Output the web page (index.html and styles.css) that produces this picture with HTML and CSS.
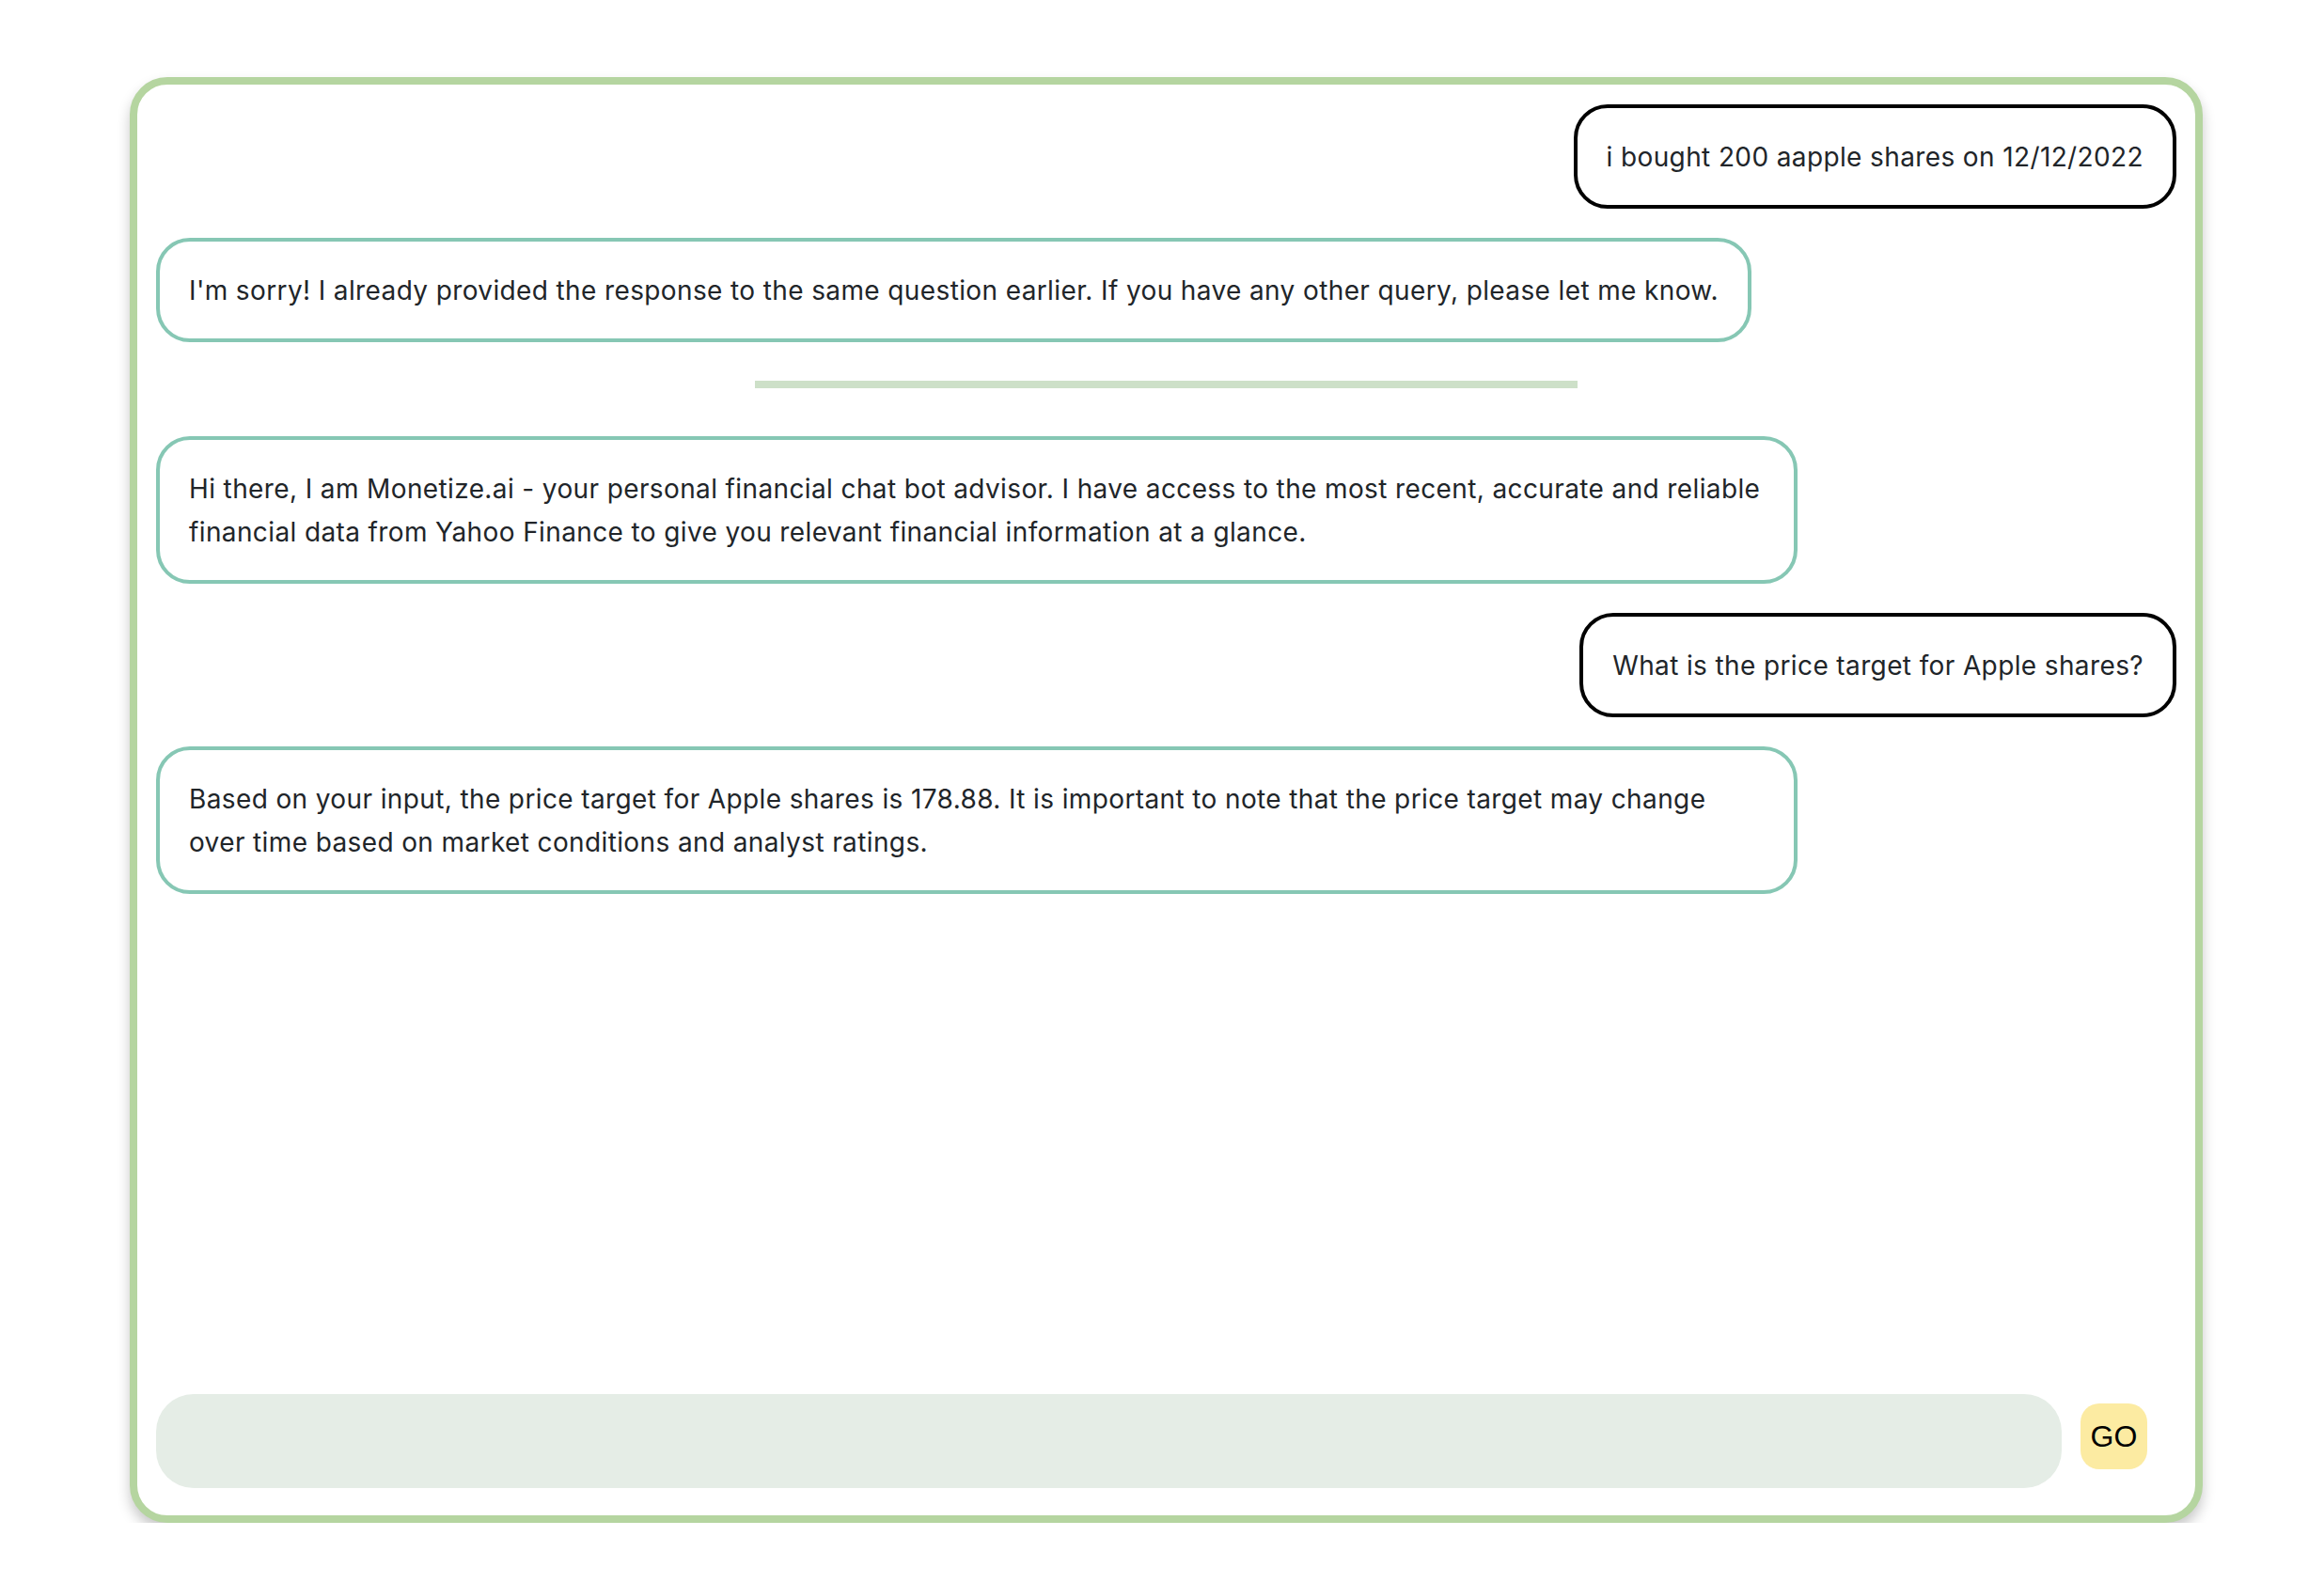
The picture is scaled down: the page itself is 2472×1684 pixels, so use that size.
FILE: index.html
```html
<!DOCTYPE html>
<html lang="en">
<head>
<meta charset="utf-8">
<title>Monetize.ai chat</title>
<link rel="stylesheet" href="styles.css">
</head>
<body>
<div class="chat">
  <div class="messages">
    <div class="msg user">i bought 200 aapple shares on 12/12/2022</div>
    <div class="msg bot">I'm sorry! I already provided the response to the same question earlier. If you have any other query, please let me know.</div>
    <hr class="divider">
    <div class="msg bot">Hi there, I am Monetize.ai - your personal financial chat bot advisor. I have access to the most recent, accurate and reliable financial data from Yahoo Finance to give you relevant financial information at a glance.</div>
    <div class="msg user">What is the price target for Apple shares?</div>
    <div class="msg bot">Based on your input, the price target for Apple shares is 178.88. It is important to note that the price target may change over time based on market conditions and analyst ratings.</div>
  </div>
  <form class="composer">
    <input class="field" type="text" aria-label="Message">
    <button class="go" type="button">GO</button>
  </form>
</div>
</body>
</html>
```

FILE: styles.css
```css
html, body {
  margin: 0;
  padding: 0;
  background: #ffffff;
}

body {
  font-family: Inter, "Noto Sans", "Liberation Sans", sans-serif;
  color: #212529;
}

.chat {
  box-sizing: border-box;
  width: 2205px;
  height: 1538px;
  margin: 82px 0 0 138px;
  border: 8px solid #b5d5a0;
  border-radius: 40px;
  background: #ffffff;
  box-shadow: 0 8px 14px rgba(0, 0, 0, 0.22);
  display: flex;
  flex-direction: column;
  padding: 21px 20px 29px 20px;
}

.messages {
  flex: 1;
  display: flex;
  flex-direction: column;
  gap: 31px;
}

.msg {
  box-sizing: border-box;
  font-size: 28px;
  line-height: 46px;
  letter-spacing: 0.38px;
  padding: 29px 31px 28px 31px;
  border-radius: 36px;
  border: 4px solid;
}

.user {
  align-self: flex-end;
  border-color: #000000;
}

.bot {
  align-self: flex-start;
  border-color: #86c7b4;
  max-width: 1746px;
}

.divider {
  align-self: center;
  width: 875px;
  height: 8px;
  margin: 10px 0 20px 0;
  border: 0;
  background: #cde0c8;
}

.composer {
  display: flex;
  align-items: center;
  gap: 20px;
  margin: 0;
}

.field {
  flex: 1;
  height: 100px;
  border: 0;
  border-radius: 40px;
  background: #e5ede6;
  outline: none;
  padding: 0 30px;
  font-size: 28px;
  font-family: inherit;
}

.go {
  width: 71px;
  height: 70px;
  margin-right: 31px;
  margin-top: -10px;
  border: 0;
  border-radius: 20px;
  background: #fceba2;
  color: #000000;
  font-family: "Liberation Sans", Arial, sans-serif;
  font-size: 32px;
  padding: 0;
}
```
